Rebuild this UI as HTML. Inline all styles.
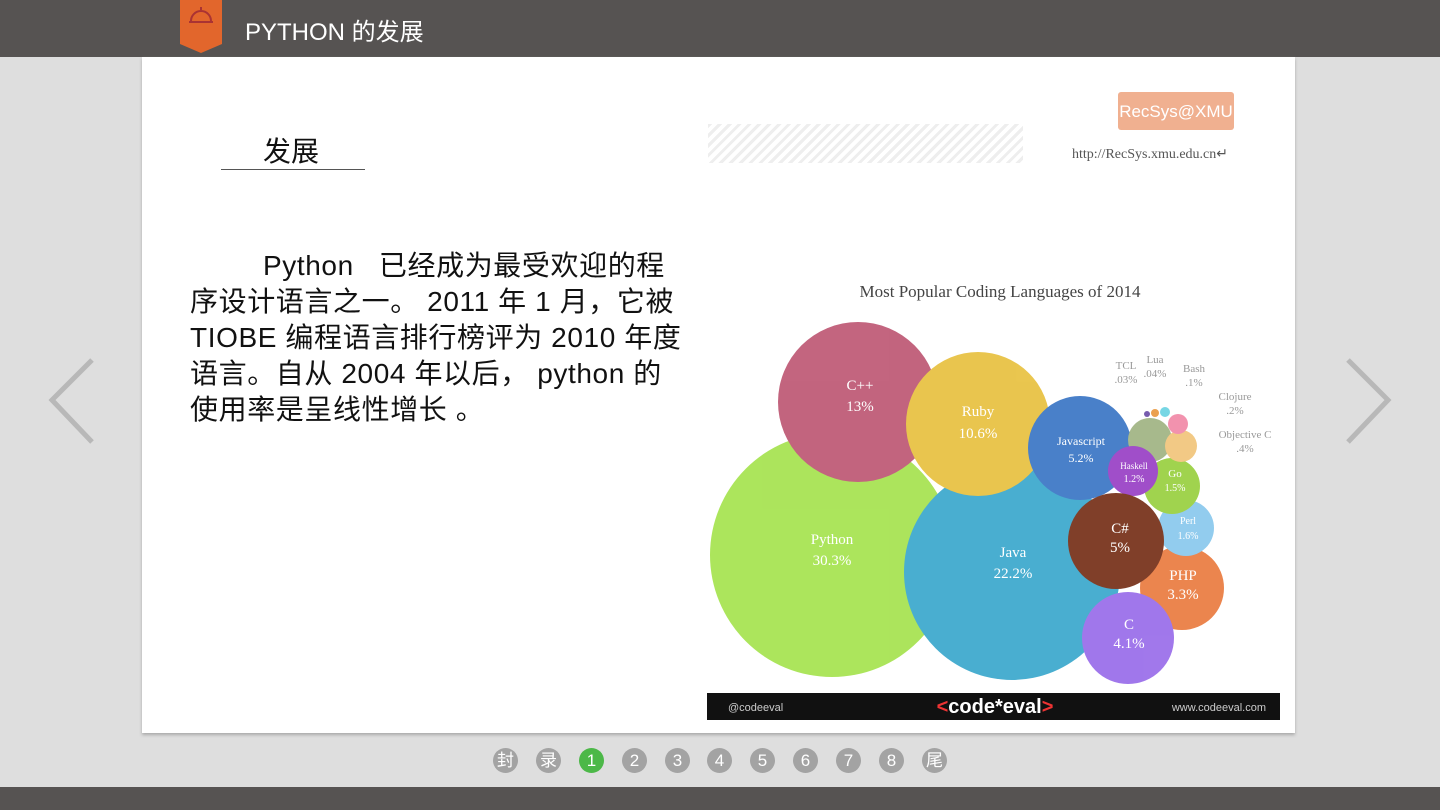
<!DOCTYPE html><html><head><meta charset="utf-8"><style>
body{margin:0;width:1440px;height:810px;overflow:hidden;background:#dedede;position:relative;font-family:"Liberation Sans","Noto Sans CJK SC",sans-serif}
.top{position:absolute;left:0;top:0;width:1440px;height:57px;background:#565352}
.bot{position:absolute;left:0;top:787px;width:1440px;height:23px;background:#565352}
.slide{position:absolute;left:142px;top:57px;width:1153px;height:676px;background:#fff;box-shadow:0 2px 3px #aaa}
.dot{position:absolute;top:748px;width:25px;height:25px;border-radius:50%;background:#a3a3a3;color:#fff;font-size:17px;text-align:center;line-height:25px}
.t{position:absolute;left:190px;font-size:28px;letter-spacing:0.6px;color:#111;white-space:nowrap;line-height:36px}
</style></head><body>
<div class="top"></div><div class="bot"></div>
<svg style="position:absolute;left:180px;top:0" width="42" height="54"><path d="M0 0H42V44L21 53L0 44Z" fill="#e2662c"/><path d="M9 22H33M11 21A10 10 0 0 1 31 21M21 7V10" stroke="#a33" stroke-width="2" fill="none"/></svg>
<div style="position:absolute;left:245px;top:12px;color:#fff;font-size:24px">PYTHON 的发展</div>
<div class="slide"></div>
<div style="position:absolute;left:263px;top:130px;font-size:28px;color:#111">发展</div>
<div style="position:absolute;left:221px;top:169px;width:144px;height:1px;background:#555"></div>
<div style="position:absolute;left:708px;top:124px;width:315px;height:39px;background:repeating-linear-gradient(135deg,#eee 0 3px,#fff 3px 7px)"></div>
<div style="position:absolute;left:1118px;top:92px;width:116px;height:38px;background:#f0b090;color:#fff;font-size:17px;text-align:center;line-height:40px;border-radius:3px">RecSys@XMU</div>
<div style="position:absolute;left:1072px;top:146px;font-family:'Liberation Serif',serif;font-size:14px;color:#555">http://RecSys.xmu.edu.cn↵</div>
<div class="t" style="top:248px;left:263px">Python&nbsp;&nbsp; 已经成为最受欢迎的程</div>
<div class="t" style="top:284px">序设计语言之一。 2011 年 1 月，它被</div>
<div class="t" style="top:320px">TIOBE 编程语言排行榜评为 2010 年度</div>
<div class="t" style="top:356px">语言。自从 2004 年以后， python 的</div>
<div class="t" style="top:392px">使用率是呈线性增长 。</div>
<svg style="position:absolute;left:0;top:0" width="1440" height="810" font-family="Liberation Serif,serif">
<text x="1000" y="297" text-anchor="middle" font-size="17" fill="#444">Most Popular Coding Languages of 2014</text>
<g opacity="0.85">
<circle cx="832" cy="555" r="122" fill="#9ee040"/>
<circle cx="1012" cy="572" r="108" fill="#2aa0c8"/>
<circle cx="858" cy="402" r="80" fill="#b84a68"/>
<circle cx="978" cy="424" r="72" fill="#e6bc30"/>
<circle cx="1080" cy="448" r="52" fill="#2a6ac0"/>
<circle cx="1182" cy="588" r="42" fill="#e87030"/>
<circle cx="1128" cy="638" r="46" fill="#9060e8"/>
<circle cx="1186" cy="528" r="28" fill="#80c4ec"/>
<circle cx="1172" cy="486" r="28" fill="#90cc30"/>
<circle cx="1150" cy="440" r="22" fill="#98ad78"/>
<circle cx="1181" cy="446" r="16" fill="#f0c070"/>
<circle cx="1178" cy="424" r="10" fill="#f080a0"/>
<circle cx="1165" cy="412" r="5" fill="#60d0e0"/>
<circle cx="1155" cy="413" r="4" fill="#e89030"/>
<circle cx="1147" cy="414" r="3" fill="#6040a0"/>
<circle cx="1133" cy="471" r="25" fill="#9030c0"/>
<circle cx="1116" cy="541" r="48" fill="#6a1e04"/>
</g>
<g fill="#fff" text-anchor="middle" font-size="15">
<text x="860" y="390">C++</text><text x="860" y="411">13%</text>
<text x="978" y="416">Ruby</text><text x="978" y="438">10.6%</text>
<text x="832" y="544">Python</text><text x="832" y="565">30.3%</text>
<text x="1013" y="557">Java</text><text x="1013" y="578">22.2%</text>
<text x="1120" y="533">C#</text><text x="1120" y="552">5%</text>
<text x="1183" y="580">PHP</text><text x="1183" y="599">3.3%</text>
<text x="1129" y="629">C</text><text x="1129" y="648">4.1%</text>
<text x="1081" y="445" font-size="12">Javascript</text><text x="1081" y="462" font-size="12">5.2%</text>
<text x="1134" y="469" font-size="9">Haskell</text><text x="1134" y="482" font-size="10">1.2%</text>
<text x="1175" y="477" font-size="11">Go</text><text x="1175" y="491" font-size="10">1.5%</text>
<text x="1188" y="524" font-size="10">Perl</text><text x="1188" y="539" font-size="10">1.6%</text>
</g>
<g fill="#999" font-size="11" text-anchor="middle">
<text x="1126" y="369">TCL</text><text x="1126" y="383">.03%</text>
<text x="1155" y="363">Lua</text><text x="1155" y="377">.04%</text>
<text x="1194" y="372">Bash</text><text x="1194" y="386">.1%</text>
<text x="1235" y="400">Clojure</text><text x="1235" y="414">.2%</text>
<text x="1245" y="438">Objective C</text><text x="1245" y="452">.4%</text>
</g>
<rect x="707" y="693" width="573" height="27" fill="#111"/>
<text x="728" y="711" fill="#ccc" font-size="11" font-family="Liberation Sans,sans-serif">@codeeval</text>
<text x="995" y="713" fill="#fff" font-size="20" font-weight="bold" text-anchor="middle" font-family="Liberation Sans,sans-serif"><tspan fill="#e33">&lt;</tspan>code*eval<tspan fill="#e33">&gt;</tspan></text>
<text x="1266" y="711" fill="#ccc" font-size="11" text-anchor="end" font-family="Liberation Sans,sans-serif">www.codeeval.com</text>
<path d="M92 360L52 400L92 442" stroke="#b8b8b8" stroke-width="5" fill="none"/>
<path d="M1348 360L1388 400L1348 442" stroke="#b8b8b8" stroke-width="5" fill="none"/>
</svg>
<div class="dot" style="left:493px">封</div><div class="dot" style="left:536px">录</div>
<div class="dot" style="left:579px;background:#4cb848">1</div>
<div class="dot" style="left:622px">2</div><div class="dot" style="left:665px">3</div><div class="dot" style="left:707px">4</div><div class="dot" style="left:750px">5</div><div class="dot" style="left:793px">6</div><div class="dot" style="left:836px">7</div><div class="dot" style="left:879px">8</div><div class="dot" style="left:922px">尾</div>
</body></html>
